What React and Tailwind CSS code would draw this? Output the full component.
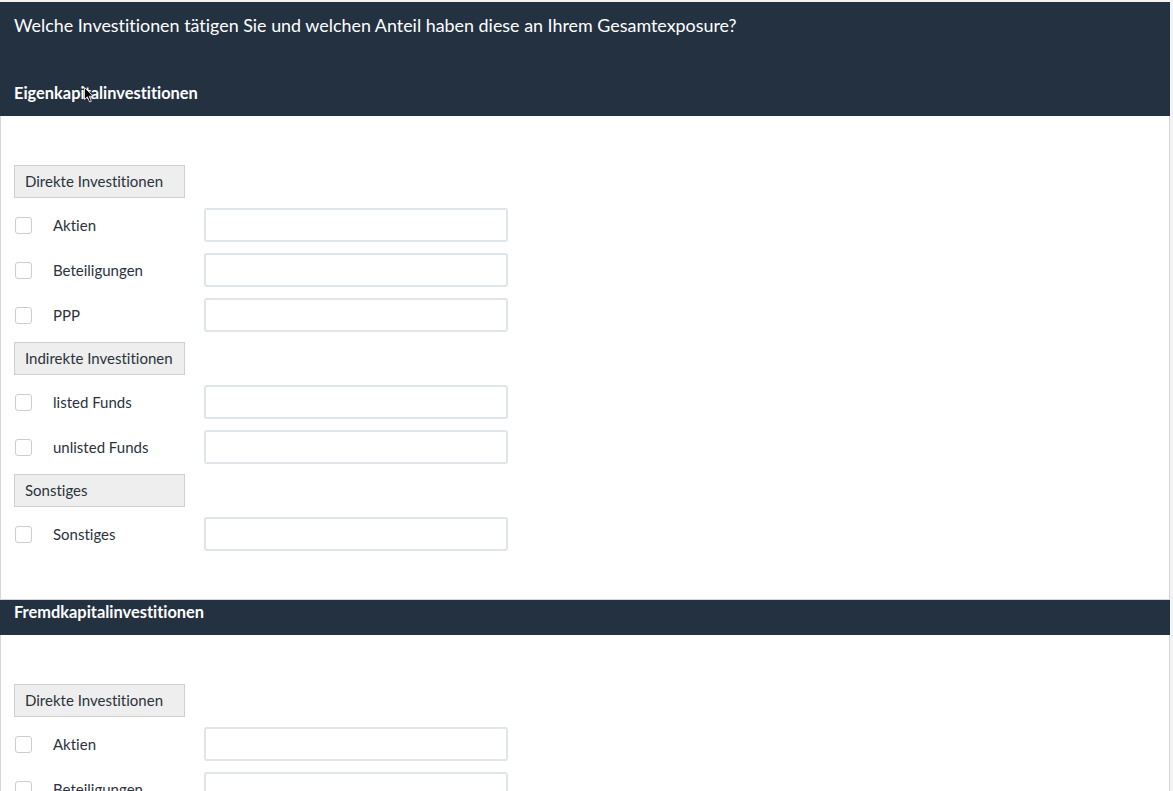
import React from "react";

const sections = [
  {
    title: "Eigenkapitalinvestitionen",
    groups: [
      { name: "Direkte Investitionen", items: ["Aktien", "Beteiligungen", "PPP"] },
      { name: "Indirekte Investitionen", items: ["listed Funds", "unlisted Funds"] },
      { name: "Sonstiges", items: ["Sonstiges"] },
    ],
  },
  {
    title: "Fremdkapitalinvestitionen",
    groups: [
      { name: "Direkte Investitionen", items: ["Aktien", "Beteiligungen", "PPP"] },
      { name: "Indirekte Investitionen", items: ["listed Funds", "unlisted Funds"] },
      { name: "Sonstiges", items: ["Sonstiges"] },
    ],
  },
];

function Row({ label, first }) {
  return (
    <div className={first ? "mt-[10px] flex items-center" : "mt-[11px] flex items-center"}>
      <span className="ml-px h-[17px] w-[17px] rounded-[3px] border border-[#c9ced3] bg-white" />
      <span className="ml-[21px] w-[151px] text-[15px] text-[#2b323b]">{label}</span>
      <input
        type="text"
        className="h-[34px] w-[304px] rounded-[3px] border-2 border-[#dfe5ea] bg-white px-2 text-[15px] outline-none"
      />
    </div>
  );
}

function Group({ group, first }) {
  return (
    <div className={first ? "" : "mt-[10px]"}>
      <div className="flex h-[33px] w-[171px] items-center border border-[#cfcfcf] bg-[#eeeeee] pl-[10px] text-[15px] text-[#2b323b]">
        {group.name}
      </div>
      {group.items.map((item, i) => (
        <Row key={item} label={item} first={i === 0} />
      ))}
    </div>
  );
}

function SectionBody({ groups }) {
  return (
    <div className="border-l border-r border-[#d6d6d6] bg-white pl-[13px] pt-[49px] pb-[48px]">
      {groups.map((g, i) => (
        <Group key={g.name} group={g} first={i === 0} />
      ))}
    </div>
  );
}

export default function App() {
  return (
    <div
      className="min-h-screen bg-[#f3f3f3] pt-[2px] pr-[3px] [font-variant-ligatures:none]"
      style={{ fontFamily: "Lato, 'Open Sans', sans-serif" }}
    >
      <div className="relative bg-[#243141] text-white">
        <div className="px-[14px] pt-[11px] text-[17.9px] leading-[24px]">
          Welche Investitionen tätigen Sie und welchen Anteil haben diese an Ihrem Gesamtexposure?
        </div>
        <div className="px-[14px] pt-[46px] pb-[13px] text-[16.4px] font-bold leading-[20px]">
          {sections[0].title}
        </div>
        {/* mouse pointer */}
        <svg className="absolute left-[84px] top-[85px]" width="10" height="16" viewBox="0 0 10 16">
          <path d="M0.5 0.5 L0.5 12.5 L3.3 9.8 L5.6 15 L7.4 14.2 L5.2 9.2 L9 9.2 Z" fill="#000" stroke="#fff" strokeWidth="0.8" />
        </svg>
      </div>
      <SectionBody groups={sections[0].groups} />

      <div className="border-t border-[#d6d6d6] bg-[#243141] px-[14px] pt-[2px] pb-[13px] text-[16.4px] font-bold leading-[20px] text-white">
        {sections[1].title}
      </div>
      <SectionBody groups={sections[1].groups} />
    </div>
  );
}
